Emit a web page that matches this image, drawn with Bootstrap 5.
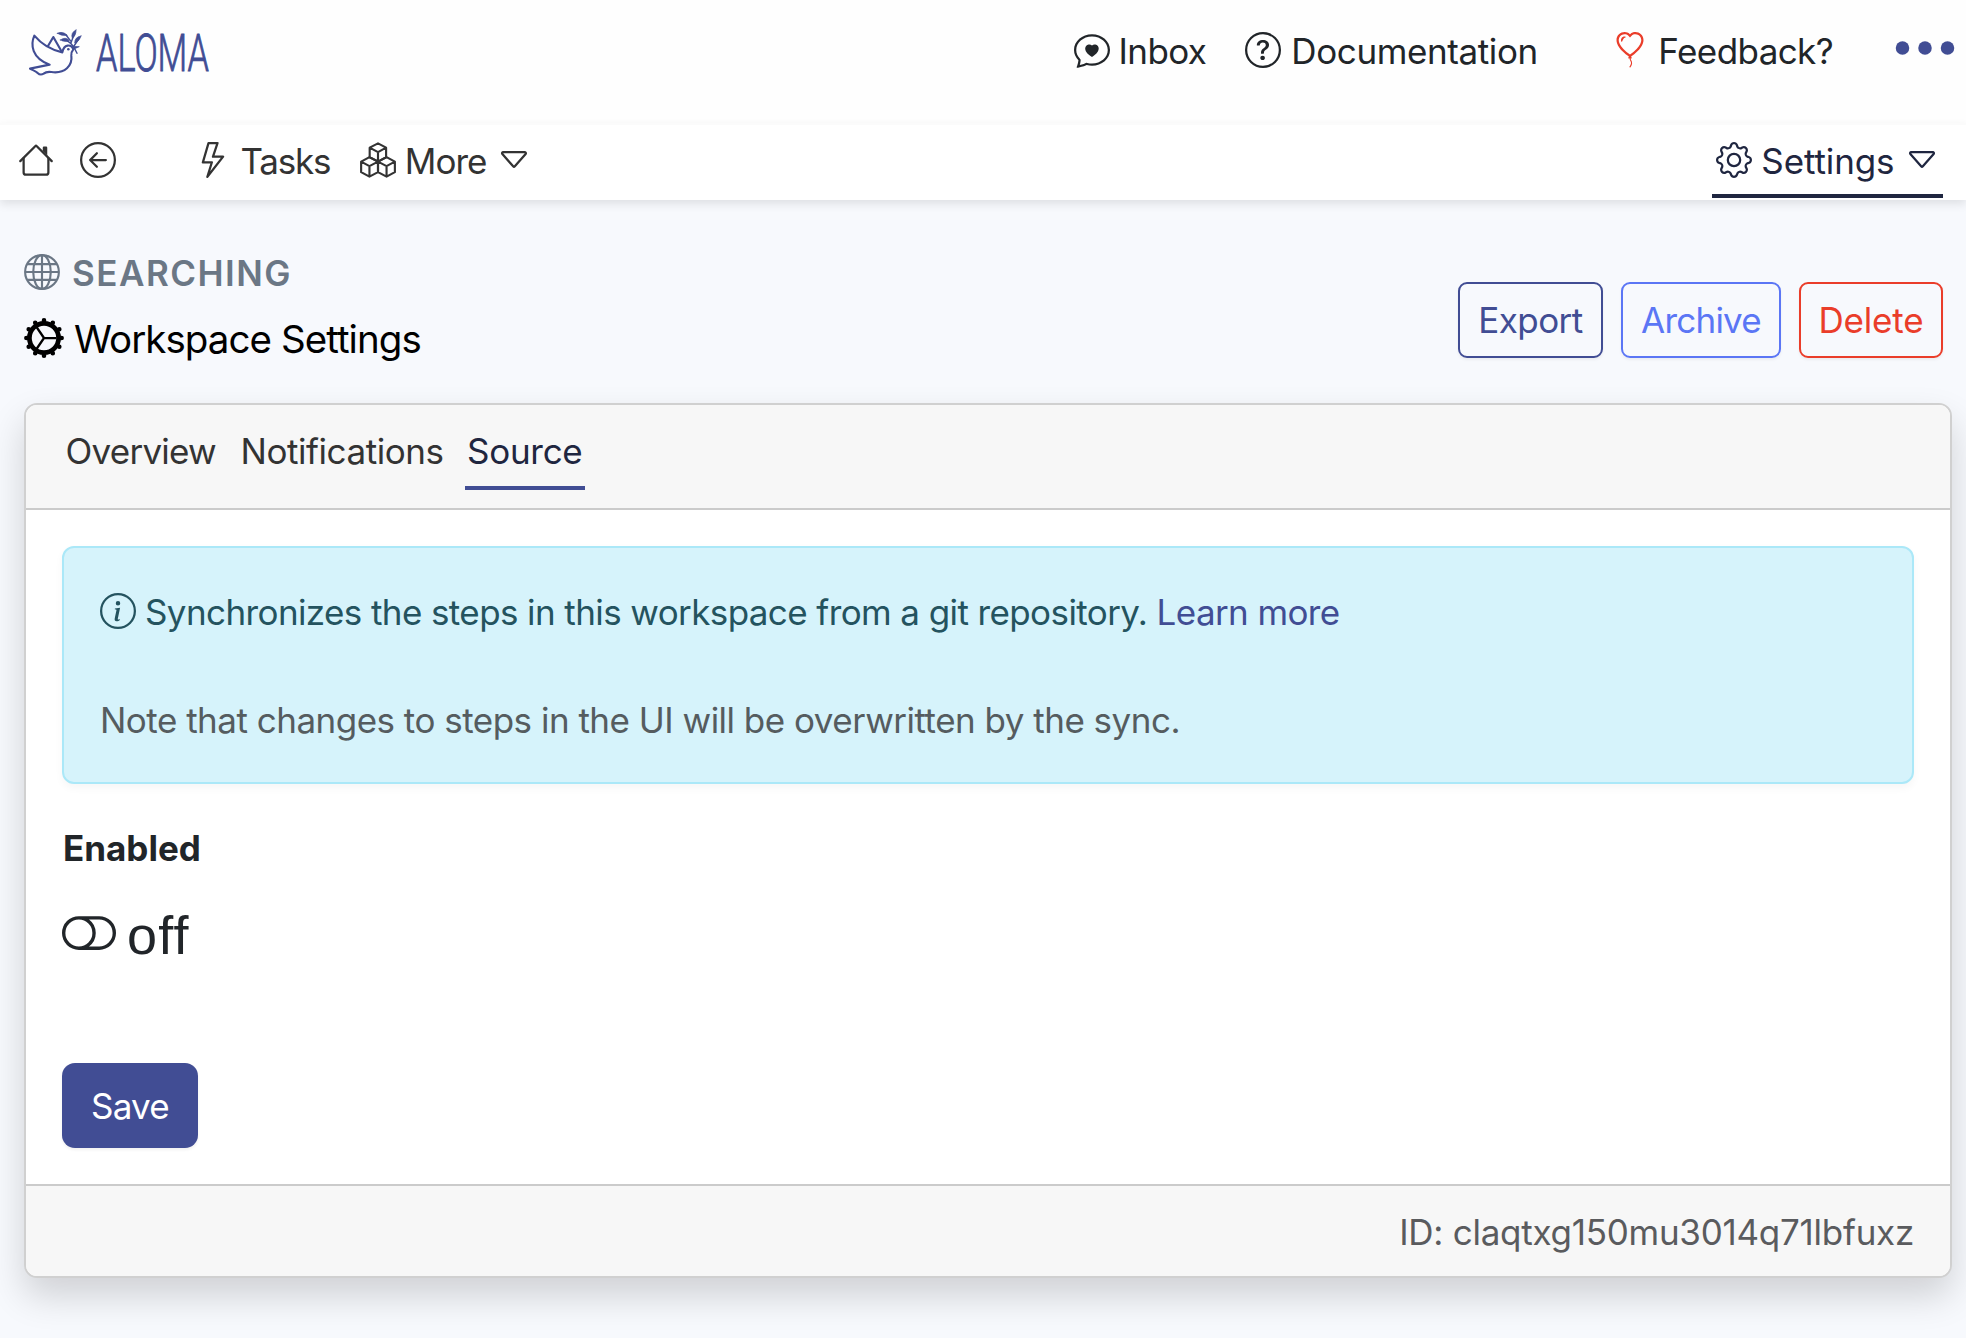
<!doctype html>
<html lang="en">
<head>
<meta charset="utf-8">
<meta name="viewport" content="width=device-width, initial-scale=1">
<title>ALOMA - Workspace Settings</title>
<link href="https://cdn.jsdelivr.net/npm/bootstrap@5.3.0/dist/css/bootstrap.min.css" rel="stylesheet">
<style>
:root { --brand: #414d94; --edge: #cbcbcb; }
body { min-height: 100vh; font-family: Inter, "Liberation Sans", sans-serif; font-size: 35px; line-height: 54px; color: #212529; background: #f7f9fd; white-space: nowrap; }
a { text-decoration: none; color: inherit; }
.ico { width: 36px; height: 36px; flex: none; fill: currentColor; margin-bottom: 2px; }
.linework { fill: none; stroke: currentColor; }
.topbar { height: 123px; padding: 31px 5px 0 26px; background: #fefefe; }
.topbar-row { height: 40px; }
.brand-art { width: 186px; height: 66px; color: var(--brand); }
.dots { width: 72px; height: 72px; margin: 0 0 6px 56px; color: var(--brand); fill: currentColor; flex: none; }
.mainnav { height: 77px; padding: 0 23px 0 18px; color: #333; background: #fff; border-top: 2px solid #fbfbfb; box-shadow: 0 4px 9px rgba(0,0,0,.1); position: relative; }
.mainnav .nav-cell { height: 73px; padding-top: 2px; border-bottom: 4px solid transparent; }
.mainnav .nav-cell.current { color: #1f2640; border-color: #1f2640; padding-left: 4px; padding-right: 3px; }
.page-head { padding: 46px 23px 0 24px; height: 203px; }
.crumb { font-weight: 600; color: #6b7785; letter-spacing: 1.49px; }
.page-title { font-size: 38.5px; font-weight: 400; line-height: 54px; color: #000; letter-spacing: -.95px; margin: 12px 0 0; }
.page-title .ico { width: 40px; height: 40px; }
.tool { height: 76px; padding: 0 0 1px; font-size: 35px; line-height: 54px; border-width: 2px; border-radius: 9px; box-shadow: 0 2px 3px rgba(0,0,0,.05); }
.tool-export { width: 145px; color: var(--brand); border-color: var(--brand); letter-spacing: -.57px; }
.tool-archive { width: 160px; color: #5b76f5; border-color: #5b76f5; letter-spacing: -.77px; }
.tool-delete { width: 144px; color: #ea3d2a; border-color: #ea3d2a; letter-spacing: -.2px; }
.panel { margin: 0 14px 0 24px; border: 2px solid #d0d0d0; border-radius: 13px; box-shadow: 0 18px 36px rgba(0,0,0,.16); }
.panel .card-header { height: 105px; padding: 19px 37px 0; background: #f7f7f7; border-bottom: 2px solid var(--edge); border-radius: 11px 11px 0 0; }
.tab { height: 66px; padding: 0 2.5px; border-bottom: 4px solid transparent; color: #333; }
.tab.current { color: #1f2640; border-color: var(--brand); }
.panel .card-body { padding: 36px; }
.panel .card-footer { height: 92px; padding: 19px 36px 0; background: #f7f7f7; border-top: 2px solid var(--edge); border-radius: 0 0 11px 11px; color: #5a5b5e; letter-spacing: -.26px; }
.notice { padding: 37px 36px 35px; margin-bottom: 37px; background: #d6f3fb; border: 2px solid #abe8f8; border-radius: 12px; color: #24535f; box-shadow: 0 4px 9px rgba(0,0,0,.04); }
.notice-note { color: #555c5f; letter-spacing: -.51px; margin-top: 54px; }
.notice a { color: var(--brand); }
.field-name { padding-left: 1px; }
.switch { height: 81px; margin-top: 19px; font-size: 54px; font-family: "Liberation Sans", sans-serif; }
.switch .ico { width: 54px; height: 54px; margin-bottom: 3px; }
.save { width: 136px; height: 85px; margin-top: 88px; padding: 1px 0 0; font-size: 35px; line-height: 54px; color: #fff; background: var(--brand); border: 0; border-radius: 13px; letter-spacing: -.77px; box-shadow: 0 2px 3px rgba(0,0,0,.06); }
</style>
</head>
<body>
<svg class="d-none" xmlns="http://www.w3.org/2000/svg">
  <symbol id="caret" viewBox="0 0 16 16"><path d="M3.204 5h9.592L8 10.481 3.204 5zm-.753.659 4.796 5.48a1 1 0 0 0 1.506 0l4.796-5.48c.566-.647.106-1.659-.753-1.659H3.204a1 1 0 0 0-.753 1.659z"/></symbol>
</svg>

<header class="topbar">
  <div class="topbar-row d-flex align-items-center">
    <a href="#" class="brand-art me-auto d-flex">
      <svg width="186" height="66" viewBox="26 18 186 66" fill="currentColor">
        <g transform="scale(.33333)" fill="none" stroke="currentColor" stroke-width="6.4" stroke-linejoin="round" stroke-linecap="round">
          <path d="M103 107C91 134 95 174 149 194L90 206C99 211 108 213 113 219Q121 227 131 221Q139 214 154 216C195 222 218 196 214 167Q213 156 220 148C213 132 192 131 187 157C154 150 124 132 103 107Z"/>
          <path d="M144 138 160 111 184 153"/>
          <path stroke-width="4.2" d="M188 122C204 119 219 131 231 160M213 128 224 99M222 138 238 114M198 105 213 124"/>
          <path fill="currentColor" stroke-width="2" d="M172 100Q188 92 202 106Q185 109 172 100ZM181 120Q196 109 208 121Q195 127 181 120ZM228 90Q211 98 217 115Q229 105 228 90ZM243 108Q224 111 224 129Q238 124 243 108ZM218 139 238 140 222 147Z"/>
          <circle cx="205" cy="148" r="3.8" fill="currentColor" stroke="none"/>
        </g>
        <text x="96" y="71" font-family="Roboto, Inter, sans-serif" font-weight="300" font-size="52.7" stroke="currentColor" stroke-width=".9" textLength="113" lengthAdjust="spacingAndGlyphs">ALOMA</text>
      </svg>
    </a>
    <a href="#" class="d-flex align-items-center">
      <svg class="ico" viewBox="0 0 16 16"><path d="M2.965 12.695a1 1 0 0 0-.287-.801C1.618 10.83 1 9.468 1 8c0-3.192 3.004-6 7-6s7 2.808 7 6c0 3.193-3.004 6-7 6a8.06 8.06 0 0 1-2.088-.272 1 1 0 0 0-.711.074c-.387.196-1.24.57-2.634.893a10.97 10.97 0 0 0 .398-2Zm-.8 3.108.02-.004c1.83-.363 2.948-.842 3.468-1.105A9.06 9.06 0 0 0 8 15c4.418 0 8-3.134 8-7s-3.582-7-8-7-8 3.134-8 7c0 1.76.743 3.37 1.97 4.6a10.437 10.437 0 0 1-.524 2.318l-.003.011a10.722 10.722 0 0 1-.244.637c-.079.186.074.394.273.362a21.673 21.673 0 0 0 .693-.125ZM8 5.993c1.664-1.711 5.825 1.283 0 5.132-5.825-3.85-1.664-6.843 0-5.132Z"/></svg>
      <span style="margin-left:9px;letter-spacing:-.6px">Inbox</span>
    </a>
    <a href="#" class="d-flex align-items-center" style="margin-left:39px">
      <svg class="ico" viewBox="0 0 16 16"><path d="M8 15A7 7 0 1 1 8 1a7 7 0 0 1 0 14zm0 1A8 8 0 1 0 8 0a8 8 0 0 0 0 16z"/><path d="M5.255 5.786a.237.237 0 0 0 .241.247h.825c.138 0 .248-.113.266-.25.09-.656.54-1.134 1.342-1.134.686 0 1.314.343 1.314 1.168 0 .635-.374.927-.965 1.371-.673.489-1.206 1.06-1.168 1.987l.003.217a.25.25 0 0 0 .25.246h.811a.25.25 0 0 0 .25-.25v-.105c0-.718.273-.927 1.01-1.486.609-.463 1.244-.977 1.244-2.056 0-1.511-1.276-2.241-2.673-2.241-1.267 0-2.655.59-2.75 2.286zm1.557 5.763c0 .533.425.927 1.01.927.609 0 1.028-.394 1.028-.927 0-.552-.42-.94-1.029-.94-.584 0-1.009.388-1.009.94z"/></svg>
      <span style="margin-left:10px;letter-spacing:-.39px">Documentation</span>
    </a>
    <a href="#" class="d-flex align-items-center" style="margin-left:74.5px">
      <svg class="ico" style="color:#ea3d2a" viewBox="0 0 16 16"><path fill-rule="evenodd" d="m8 2.42-.717-.737c-1.13-1.161-3.243-.777-4.01.72-.35.685-.451 1.707.236 3.062C4.16 6.753 5.52 8.32 8 10.042c2.479-1.723 3.839-3.29 4.491-4.577.687-1.355.587-2.377.236-3.061-.767-1.498-2.88-1.882-4.01-.721L8 2.42Zm-.49 8.5c-10.78-7.44-3-13.155.359-10.063.045.041.089.084.132.129.043-.045.087-.088.132-.129 3.36-3.092 11.137 2.624.357 10.063l.235.468a.25.25 0 1 1-.448.224l-.008-.017c.008.11.02.202.037.29.054.27.161.488.419 1.003.288.578.235 1.15.076 1.629-.157.469-.422.867-.588 1.115l-.004.007a.25.25 0 1 1-.416-.278c.168-.252.4-.6.533-1.003.133-.396.163-.824-.049-1.246l-.013-.028c-.24-.48-.38-.758-.448-1.102a3.177 3.177 0 0 1-.052-.45l-.04.08a.25.25 0 1 1-.447-.224l.235-.468ZM6.013 2.06c-.649-.18-1.483.083-1.85.798-.131.258-.245.689-.08 1.335.063.244.414.198.487-.043.21-.697.627-1.447 1.359-1.692.217-.073.304-.337.084-.398Z"/></svg>
      <span style="margin-left:10px;letter-spacing:-.6px">Feedback?</span>
    </a>
    <svg class="dots" viewBox="0 0 16 16"><circle cx="3" cy="8" r="1.5"/><circle cx="8" cy="8" r="1.5"/><circle cx="13" cy="8" r="1.5"/></svg>
  </div>
</header>

<nav class="mainnav d-flex">
  <a href="#" class="nav-cell d-flex align-items-center">
    <svg class="ico" viewBox="0 0 16 16"><path d="M2 13.5V7h1v6.5a.5.5 0 0 0 .5.5h9a.5.5 0 0 0 .5-.5V7h1v6.5a1.5 1.5 0 0 1-1.5 1.5h-9A1.5 1.5 0 0 1 2 13.5zm11-11V6l-2-2V2.5a.5.5 0 0 1 .5-.5h1a.5.5 0 0 1 .5.5z"/><path d="M7.293 1.5a1 1 0 0 1 1.414 0l6.647 6.646a.5.5 0 0 1-.708.708L8 2.207 1.354 8.854a.5.5 0 1 1-.708-.708L7.293 1.5z"/></svg>
  </a>
  <a href="#" class="nav-cell d-flex align-items-center" style="margin-left:26px">
    <svg class="ico" viewBox="0 0 16 16"><path d="M1 8a7 7 0 1 0 14 0A7 7 0 0 0 1 8zm15 0A8 8 0 1 1 0 8a8 8 0 0 1 16 0zm-4.5-.5a.5.5 0 0 1 0 1H5.707l2.147 2.146a.5.5 0 0 1-.708.708l-3-3a.5.5 0 0 1 0-.708l3-3a.5.5 0 1 1 .708.708L5.707 7.5H11.5z"/></svg>
  </a>
  <a href="#" class="nav-cell d-flex align-items-center" style="margin-left:79px">
    <svg class="ico" viewBox="0 0 16 16"><path d="M5.52.359A.5.5 0 0 1 6 0h4a.5.5 0 0 1 .474.658L8.694 6H12.5a.5.5 0 0 1 .395.807l-7 9a.5.5 0 0 1-.873-.454L6.823 9.5H3.5a.5.5 0 0 1-.48-.641l2.5-8.5zM6.374 1 4.168 8.5H7.5a.5.5 0 0 1 .478.647L6.78 13.04 11.478 7H8a.5.5 0 0 1-.474-.658L9.306 1H6.374z"/></svg>
    <span style="margin-left:9.5px;letter-spacing:-1.2px">Tasks</span>
  </a>
  <a href="#" class="nav-cell d-flex align-items-center" style="margin-left:29.5px">
    <svg class="ico linework" viewBox="0 0 16 16" stroke-width=".95" stroke-linejoin="round"><path d="M8 .6 11.6 2.5V6.8L8 8.7 4.3 6.8V2.5ZM4.3 2.5 8 4.5 11.6 2.5M8 4.5V8.7"/><path d="M4.2 6.7 8 8.7V13.4L4.2 15.4.5 13.4V8.7ZM.5 8.7 4.2 10.7 8 8.7M4.2 10.7V15.4"/><path d="M11.8 6.7 15.5 8.7V13.4L11.8 15.4 8 13.4V8.7ZM8 8.7 11.8 10.7 15.5 8.7M11.8 10.7V15.4"/></svg>
    <span style="margin-left:9px;letter-spacing:-1px">More</span>
    <svg class="ico" style="margin-left:10px"><use href="#caret"/></svg>
  </a>
  <a href="#" class="nav-cell current ms-auto d-flex align-items-center">
    <svg class="ico" viewBox="0 0 16 16"><path d="M8 4.754a3.246 3.246 0 1 0 0 6.492 3.246 3.246 0 0 0 0-6.492zM5.754 8a2.246 2.246 0 1 1 4.492 0 2.246 2.246 0 0 1-4.492 0z"/><path d="M9.796 1.343c-.527-1.79-3.065-1.79-3.592 0l-.094.319a.873.873 0 0 1-1.255.52l-.292-.16c-1.64-.892-3.433.902-2.54 2.541l.159.292a.873.873 0 0 1-.52 1.255l-.319.094c-1.79.527-1.79 3.065 0 3.592l.319.094a.873.873 0 0 1 .52 1.255l-.16.292c-.892 1.64.901 3.434 2.541 2.54l.292-.159a.873.873 0 0 1 1.255.52l.094.319c.527 1.79 3.065 1.79 3.592 0l.094-.319a.873.873 0 0 1 1.255-.52l.292.16c1.64.893 3.434-.902 2.54-2.541l-.159-.292a.873.873 0 0 1 .52-1.255l.319-.094c1.79-.527 1.79-3.065 0-3.592l-.319-.094a.873.873 0 0 1-.52-1.255l.16-.292c.893-1.64-.902-3.433-2.541-2.54l-.292.159a.873.873 0 0 1-1.255-.52l-.094-.319zm-2.633.283c.246-.835 1.428-.835 1.674 0l.094.319a1.873 1.873 0 0 0 2.693 1.115l.291-.16c.764-.415 1.6.42 1.184 1.185l-.159.292a1.873 1.873 0 0 0 1.116 2.692l.318.094c.835.246.835 1.428 0 1.674l-.319.094a1.873 1.873 0 0 0-1.115 2.693l.16.291c.415.764-.42 1.6-1.185 1.184l-.291-.159a1.873 1.873 0 0 0-2.693 1.116l-.094.318c-.246.835-1.428.835-1.674 0l-.094-.319a1.873 1.873 0 0 0-2.692-1.115l-.292.16c-.764.415-1.6-.42-1.184-1.185l.159-.291A1.873 1.873 0 0 0 1.945 8.93l-.319-.094c-.835-.246-.835-1.428 0-1.674l.319-.094A1.873 1.873 0 0 0 3.06 4.377l-.16-.292c-.415-.764.42-1.6 1.185-1.184l.292.159a1.873 1.873 0 0 0 2.692-1.115l.094-.319z"/></svg>
    <span style="margin-left:9px;letter-spacing:-.1px">Settings</span>
    <svg class="ico" style="margin-left:9.5px"><use href="#caret"/></svg>
  </a>
</nav>

<main>
  <div class="page-head d-flex justify-content-between">
    <div>
      <div class="crumb d-flex align-items-center">
        <svg class="ico linework" viewBox="0 0 16 16" stroke-width=".95"><circle cx="8" cy="8" r="7.5"/><ellipse cx="8" cy="8" rx="3.9" ry="7.5"/><path d="M8 .5V15.5M.5 8H15.5M1.4 4.5H14.6M1.4 11.5H14.6"/></svg>
        <span style="margin-left:12px">SEARCHING</span>
      </div>
      <h1 class="page-title d-flex align-items-center">
        <svg class="ico linework" viewBox="0 0 16 16"><circle cx="8" cy="8" r="5.85" stroke-width="1.9"/><circle cx="8" cy="8" r="7.05" stroke-width="1.85" stroke-linecap="round" pathLength="12" stroke-dasharray="0 1"/><path stroke-width=".9" d="M13 8H8L5 3.6M8 8 5 12.4"/></svg>
        <span style="margin-left:10px">Workspace Settings</span>
      </h1>
    </div>
    <div class="d-flex" style="gap:18px;padding-top:36px">
      <button type="button" class="btn tool tool-export">Export</button>
      <button type="button" class="btn tool tool-archive">Archive</button>
      <button type="button" class="btn tool tool-delete">Delete</button>
    </div>
  </div>

  <section class="card panel">
    <div class="card-header d-flex align-items-start">
      <a href="#" class="tab" style="letter-spacing:-.75px">Overview</a>
      <a href="#" class="tab" style="letter-spacing:-.44px;margin-left:19.6px">Notifications</a>
      <a href="#" class="tab current" style="letter-spacing:-.3px;margin-left:18.5px">Source</a>
    </div>
    <div class="card-body">
      <div class="alert notice">
        <div class="d-flex align-items-center">
          <svg class="ico" viewBox="0 0 16 16"><path d="M8 15A7 7 0 1 1 8 1a7 7 0 0 1 0 14zm0 1A8 8 0 1 0 8 0a8 8 0 0 0 0 16z"/><path d="m8.93 6.588-2.29.287-.082.38.45.083c.294.07.352.176.288.469l-.738 3.468c-.194.897.105 1.319.808 1.319.545 0 1.178-.252 1.465-.598l.088-.416c-.2.176-.492.246-.686.246-.275 0-.375-.193-.304-.533L8.93 6.588zM9 4.5a1 1 0 1 1-2 0 1 1 0 0 1 2 0z"/></svg>
          <span style="margin-left:9px;letter-spacing:-.6px">Synchronizes the steps in this workspace from a git repository. <a href="#">Learn more</a></span>
        </div>
        <div class="notice-note">Note that changes to steps in the UI will be overwritten by the sync.</div>
      </div>
      <div class="field-name fw-bold">Enabled</div>
      <div class="switch d-flex align-items-center">
        <svg class="ico" viewBox="0 0 16 16"><path d="M11 4a4 4 0 0 1 0 8H8a4.992 4.992 0 0 0 2-4 4.992 4.992 0 0 0-2-4h3zm-6 8a4 4 0 1 1 0-8 4 4 0 0 1 0 8zM0 8a5 5 0 0 0 5 5h6a5 5 0 0 0 0-10H5a5 5 0 0 0-5 5z"/></svg>
        <span style="margin-left:11px;letter-spacing:1.2px">off</span>
      </div>
      <button type="button" class="btn save d-block">Save</button>
    </div>
    <div class="card-footer text-end">ID: claqtxg150mu3014q71lbfuxz</div>
  </section>
</main>
<script src="https://cdn.jsdelivr.net/npm/bootstrap@5.3.0/dist/js/bootstrap.bundle.min.js"></script>
</body>
</html>
